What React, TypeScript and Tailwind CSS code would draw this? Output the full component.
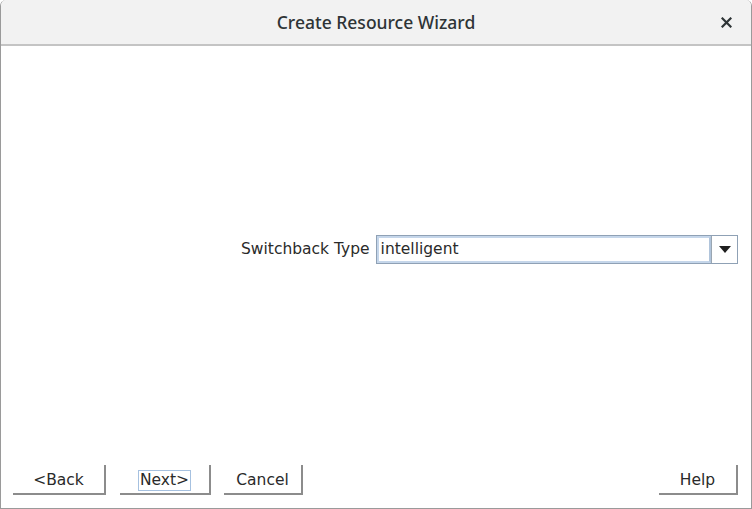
import React from "react";

function WizardButton({ label, width, focused }: { label: string; width: number; focused?: boolean }) {
  return (
    <button
      className="h-[30px] pt-[3px] flex items-center justify-center border-r-2 border-b-2 border-[#8c8c8c] bg-white text-[15.5px] text-[#2a2a2a] font-['DejaVu_Sans',sans-serif]"
      style={{ width }}
    >
      <span className={focused ? "px-[1px] border border-[#a6c1e0] leading-[19px]" : "leading-[19px]"}>{label}</span>
    </button>
  );
}

export default function App() {
  return (
    <div className="w-[752px] h-[509px] bg-white flex flex-col border-l border-r border-b border-[#9a9a9a] rounded-t-[6px] overflow-hidden font-['DejaVu_Sans',sans-serif]">
      {/* Title bar */}
      <div className="h-[46px] shrink-0 bg-[#f2f2f2] border-b-2 border-[#c4c4c4] flex items-center relative">
        <div className="flex-1 text-center text-[17.5px] font-medium text-[#2e3436] font-['Noto_Sans',sans-serif]">
          Create Resource Wizard
        </div>
        <span className="absolute right-[19px] top-[17px]">
          <svg width="11" height="11" viewBox="0 0 11 11">
            <path d="M1.5 1.5 L9.5 9.5 M9.5 1.5 L1.5 9.5" stroke="#2e3436" strokeWidth="2.2" strokeLinecap="square" />
          </svg>
        </span>
      </div>

      {/* Content */}
      <div className="flex-1 flex items-center pl-[240px] pr-[13px] pb-[10px]">
        <span className="text-[15.5px] text-[#2a2a2a] mr-[6px] pt-[2px]">Switchback Type</span>
        <div className="flex-1 h-[29px] flex border border-[#8fa1b5] bg-white">
          <div className="flex-1 border-2 border-[#c5d6ea] border-r-[#b0c4db] pl-[2px] pt-[2px] flex items-center text-[15.5px] text-[#2a2a2a]">
            intelligent
          </div>
          <div className="w-[26px] flex items-center justify-center border-l border-[#9aa6b2]">
            <svg width="12" height="7" viewBox="0 0 12 7">
              <path d="M0 0 L12 0 L6 7 Z" fill="#1f1f1f" />
            </svg>
          </div>
        </div>
      </div>

      {/* Button row */}
      <div className="h-[46px] shrink-0 flex items-start pl-[12px] pr-[13px] pt-[3px]">
        <WizardButton label="<Back" width={93} />
        <div className="w-[14px]" />
        <WizardButton label="Next>" width={91} focused />
        <div className="w-[13px]" />
        <WizardButton label="Cancel" width={79} />
        <div className="flex-1" />
        <WizardButton label="Help" width={79} />
      </div>
    </div>
  );
}
